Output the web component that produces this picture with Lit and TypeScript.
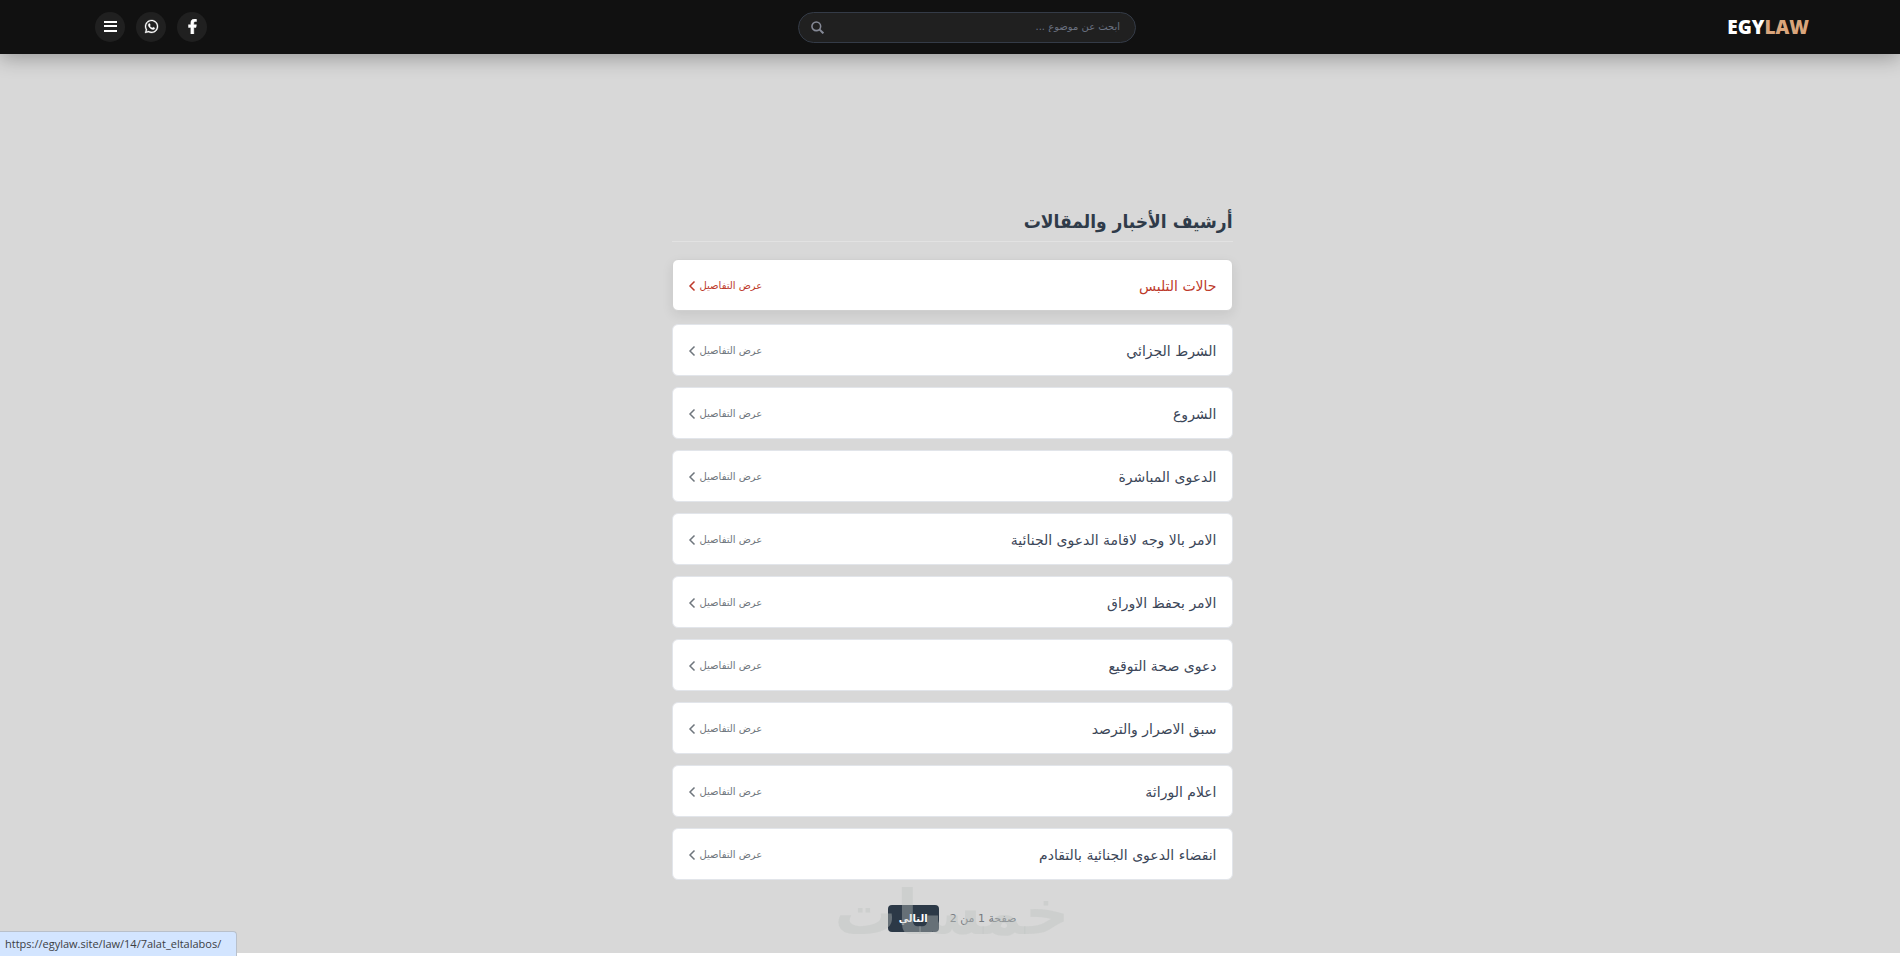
import { LitElement, html, css, svg } from "lit";
import { customElement, property } from "lit/decorators.js";
import { classMap } from "lit/directives/class-map.js";

const ARTICLES = [
  "حالات التلبس",
  "الشرط الجزائي",
  "الشروع",
  "الدعوى المباشرة",
  "الامر بالا وجه لاقامة الدعوى الجنائية",
  "الامر بحفظ الاوراق",
  "دعوى صحة التوقيع",
  "سبق الاصرار والترصد",
  "اعلام الوراثة",
  "انقضاء الدعوى الجنائية بالتقادم",
];

const facebook = svg`<svg viewBox="0 0 320 512" width="15" height="15" aria-hidden="true"><path fill="currentColor" stroke="currentColor" stroke-width="16" d="M279 288l14-93h-89v-60c0-25 12-50 52-50h41V7s-37-7-72-7c-73 0-121 44-121 125v70H23v93h81v224h100V288z"/></svg>`;
const whatsapp = svg`<svg viewBox="0 0 448 512" width="15" height="15" aria-hidden="true"><path fill="currentColor" stroke="currentColor" stroke-width="10" d="M380.900 97.100C339 55.100 283.200 32 223.900 32c-122.400 0-222 99.600-222 222 0 39.100 10.200 77.300 29.600 111L0 480l117.700-30.900c32.400 17.700 68.900 27 106.100 27h.1c122.300 0 224.100-99.600 224.100-222 0-59.300-25.200-115-67.100-157zm-157 341.600c-33.200 0-65.700-8.900-94-25.700l-6.700-4-69.800 18.300L72 359.200l-4.400-7c-18.500-29.400-28.200-63.300-28.200-98.200 0-101.700 82.800-184.500 184.600-184.500 49.300 0 95.600 19.200 130.400 54.100 34.800 34.900 56.200 81.200 56.100 130.500 0 101.800-84.900 184.600-186.600 184.600zm101.200-138.200c-5.500-2.800-32.800-16.200-37.900-18-5.100-1.900-8.800-2.800-12.500 2.800-3.700 5.600-14.300 18-17.600 21.800-3.200 3.700-6.500 4.200-12 1.400-32.600-16.300-54-29.100-75.500-66-5.700-9.800 5.700-9.100 16.300-30.300 1.800-3.700.9-6.900-.5-9.700-1.400-2.800-12.500-30.100-17.100-41.200-4.500-10.800-9.100-9.300-12.500-9.500-3.200-.2-6.900-.2-10.600-.2-3.700 0-9.700 1.400-14.800 6.900-5.100 5.600-19.400 19-19.400 46.300 0 27.300 19.900 53.700 22.600 57.400 2.800 3.700 39.100 59.700 94.800 83.800 35.200 15.200 49 16.500 66.600 13.900 10.700-1.600 32.800-13.400 37.400-26.400 4.600-13 4.600-24.100 3.200-26.400-1.300-2.500-5-3.900-10.500-6.600z"/></svg>`;
const bars = svg`<svg viewBox="0 0 14 14" width="14" height="14" aria-hidden="true"><path fill="currentColor" d="M1 2h13v2H1zM1 6h13v2H1zM1 11h13v2H1z"/></svg>`;
const magnifier = svg`<svg viewBox="0 0 14 14" width="13" height="13" aria-hidden="true"><circle cx="5.700" cy="5.700" r="4.700" fill="none" stroke="currentColor" stroke-width="1.700"/><path d="M9 9l4.300 4.300" stroke="currentColor" stroke-width="2.200"/></svg>`;
const chevron = svg`<svg viewBox="0 0 8 12" width="8" height="12" aria-hidden="true"><path d="M6.500 1.500L2 6l4.500 4.500" fill="none" stroke="currentColor" stroke-width="1.500"/></svg>`;

@customElement("site-header")
export class SiteHeader extends LitElement {
  static styles = css`
    :host {
      display: block;
      position: relative;
      z-index: 1;
      background: #111;
      box-shadow: 0 4px 20px rgba(0, 0, 0, 0.3);
    }
    .bar {
      display: flex;
      align-items: center;
      justify-content: space-between;
      height: 54px;
      padding-inline: 91px 5%;
    }
    .logo {
      color: #fff;
      font: 900 19px/24px "Open Sans", sans-serif;
      text-decoration: none;
      direction: ltr;
    }
    .accent {
      color: #d9a57c;
    }
    .search {
      box-sizing: border-box;
      display: flex;
      align-items: center;
      width: 338px;
      height: 31px;
      padding: 0 15px 0 12px;
      border: 1px solid #343b47;
      border-radius: 16px;
      background: #202020;
    }
    .field {
      flex: 1;
      min-width: 0;
      padding: 0;
      border: 0;
      outline: 0;
      background: none;
      color: #fff;
      font: 10px/16px "DejaVu Sans", sans-serif;
    }
    .field::placeholder {
      color: #6b7280;
      opacity: 1;
    }
    .go,
    .round {
      display: flex;
      align-items: center;
      justify-content: center;
      padding: 0;
      border: 0;
    }
    .go {
      background: none;
      color: #858996;
    }
    .actions {
      display: flex;
      gap: 11px;
    }
    .round {
      box-sizing: border-box;
      width: 30px;
      height: 30px;
      padding-bottom: 2px;
      border-radius: 50%;
      background: #202020;
      color: #fff;
    }
  `;

  render() {
    return html`<header class="bar">
      <a class="logo" href="#">EGY<span class="accent">LAW</span></a>
      <form class="search" role="search" @submit=${(e: Event) => e.preventDefault()}>
        <input class="field" type="text" aria-label="ابحث عن موضوع" placeholder="ابحث عن موضوع ..." />
        <button class="go" aria-label="بحث">${magnifier}</button>
      </form>
      <nav class="actions">
        <a class="round" href="#" aria-label="Facebook">${facebook}</a>
        <a class="round" href="#" aria-label="WhatsApp">${whatsapp}</a>
        <button class="round" aria-label="القائمة">${bars}</button>
      </nav>
    </header>`;
  }
}

@customElement("article-card")
export class ArticleCard extends LitElement {
  @property() heading = "";
  @property({ type: Boolean }) active = false;

  static styles = css`
    :host {
      display: block;
    }
    .card {
      box-sizing: border-box;
      display: flex;
      align-items: center;
      justify-content: space-between;
      height: 52px;
      padding: 1px 15px 0;
      border: 1px solid #e2e5ea;
      border-radius: 6px;
      background: #fff;
      color: #3b4658;
      text-decoration: none;
      font-family: "DejaVu Sans", sans-serif;
    }
    .active {
      color: #bd3a2b;
      border-color: #d0d0d0;
      box-shadow: 0 4px 12px rgba(0, 0, 0, 0.08);
      transform: translateY(-2px);
    }
    .heading {
      font-size: 14px;
      line-height: 24px;
    }
    .more {
      display: flex;
      align-items: center;
      gap: 4px;
      color: #6f767d;
      font-size: 10px;
      line-height: 16px;
    }
    .active .more {
      color: inherit;
    }
  `;

  render() {
    return html`<a class=${classMap({ card: true, active: this.active })} href="#">
      <span class="heading">${this.heading}</span>
      <span class="more">عرض التفاصيل ${chevron}</span>
    </a>`;
  }
}

@customElement("app-root")
export class AppRoot extends LitElement {
  static styles = css`
    :host {
      display: block;
      direction: rtl;
      font-family: "DejaVu Sans", sans-serif;
    }
    .page {
      display: flow-root;
      min-height: calc(100vh - 3px);
      background: #d8d8d8;
    }
    .content {
      padding: 148px 0 0 4px;
    }
    .archive {
      width: 561px;
      max-width: 94%;
      margin: 0 auto;
    }
    .title {
      margin: 0 0 19px;
      padding: 1px 0 2px;
      border-bottom: 1px solid #e2e2e2;
      color: #2f3b49;
      font: 700 19px/36px "DejaVu Sans Condensed", "DejaVu Sans", sans-serif;
      font-stretch: condensed;
    }
    .list {
      display: grid;
      gap: 11px;
      margin: 0;
      padding: 0;
      list-style: none;
    }
    .pager {
      position: relative;
      display: flex;
      align-items: center;
      justify-content: center;
      gap: 11px;
      padding: 25px 0 20px;
    }
    .count {
      color: #757a80;
      font-size: 11px;
      line-height: 16px;
    }
    .next {
      width: 51px;
      height: 27px;
      border-radius: 4px;
      background: #2c3947;
      color: #fff;
      font-size: 10px;
      line-height: 27px;
      font-weight: 700;
      text-align: center;
      text-decoration: none;
    }
    .mark {
      position: absolute;
      inset: 0;
      color: rgba(190, 194, 192, 0.4);
      font-size: 62px;
      line-height: 66px;
      font-weight: 700;
      text-align: center;
      pointer-events: none;
    }
    .status {
      position: fixed;
      left: 0;
      bottom: 0;
      box-sizing: border-box;
      height: 25px;
      padding: 0 15px 0 5px;
      border: 1px solid #b9c0ca;
      border-width: 1px 1px 0 0;
      border-radius: 0 4px 0 0;
      background: #d3e5ff;
      color: #3c4043;
      direction: ltr;
      font: 11px/23px "Open Sans", sans-serif;
    }
  `;

  render() {
    return html`<div class="page">
        <site-header></site-header>
        <div class="content">
          <main class="archive">
            <h1 class="title">أرشيف الأخبار والمقالات</h1>
            <ul class="list">
              ${ARTICLES.map(
                (name, i) => html`<li><article-card .heading=${name} .active=${i === 0}></article-card></li>`
              )}
            </ul>
            <nav class="pager" aria-label="الصفحات">
              <span class="count">صفحة 1 من 2</span>
              <a class="next" href="#">التالي</a>
              <span class="mark" aria-hidden="true">خمسات</span>
            </nav>
          </main>
        </div>
      </div>
      <div class="status">https://egylaw.site/law/14/7alat_eltalabos/</div>`;
  }
}
